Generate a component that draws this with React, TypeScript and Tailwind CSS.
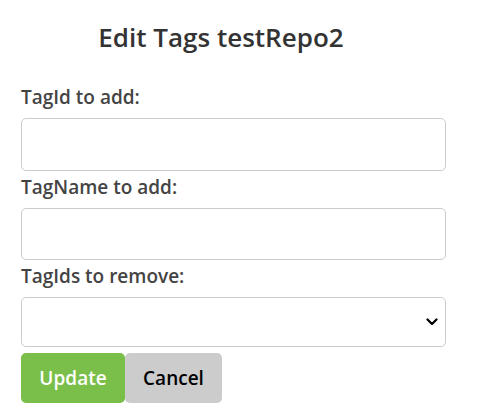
export default function App() {
  return (
    <div className="w-[495px] h-[417px] bg-white font-['Open_Sans','Noto_Sans',sans-serif]">
      {/* Title */}
      <div className="w-[442px] pt-[17px] text-center text-[26px] leading-[40px] font-semibold text-[#333]">
        Edit Tags testRepo2
      </div>

      <form className="pl-[21px] w-[446px] pt-[23px]" onSubmit={(e) => e.preventDefault()}>
        <label className="block mt-1 mb-2 text-[19px] leading-[26px] font-semibold text-[#444]">
          TagId to add:
        </label>
        <input
          type="text"
          className="block w-full h-[53px] rounded-[5px] border border-[#ccc] px-3 outline-none"
        />

        <label className="block mt-1 mb-2 text-[19px] leading-[25px] font-semibold text-[#444]">
          TagName to add:
        </label>
        <input
          type="text"
          className="block w-full h-[52px] rounded-[5px] border border-[#ccc] px-3 outline-none"
        />

        <label className="block mt-1 mb-2 text-[19px] leading-[25px] font-semibold text-[#444]">
          TagIds to remove:
        </label>
        <div className="relative">
          <select className="block w-full h-[50px] appearance-none rounded-[5px] border border-[#ccc] bg-white px-3 outline-none" />
          <svg
            className="absolute right-[8px] top-[21px] pointer-events-none"
            width="12"
            height="8"
            viewBox="0 0 12 8"
            fill="none"
          >
            <path d="M1.5 1.5 L6 6 L10.5 1.5" stroke="#000" strokeWidth="2.2" strokeLinecap="round" strokeLinejoin="round" />
          </svg>
        </div>

        <div className="flex mt-[6px]">
          <button
            type="submit"
            className="h-[50px] w-[104px] rounded-[5px] bg-[#7bbf4b] text-white text-[19px] font-semibold"
          >
            Update
          </button>
          <button
            type="button"
            className="h-[50px] w-[97px] rounded-[5px] bg-[#cccccc] text-black text-[19px] font-semibold"
          >
            Cancel
          </button>
        </div>
      </form>
    </div>
  );
}
